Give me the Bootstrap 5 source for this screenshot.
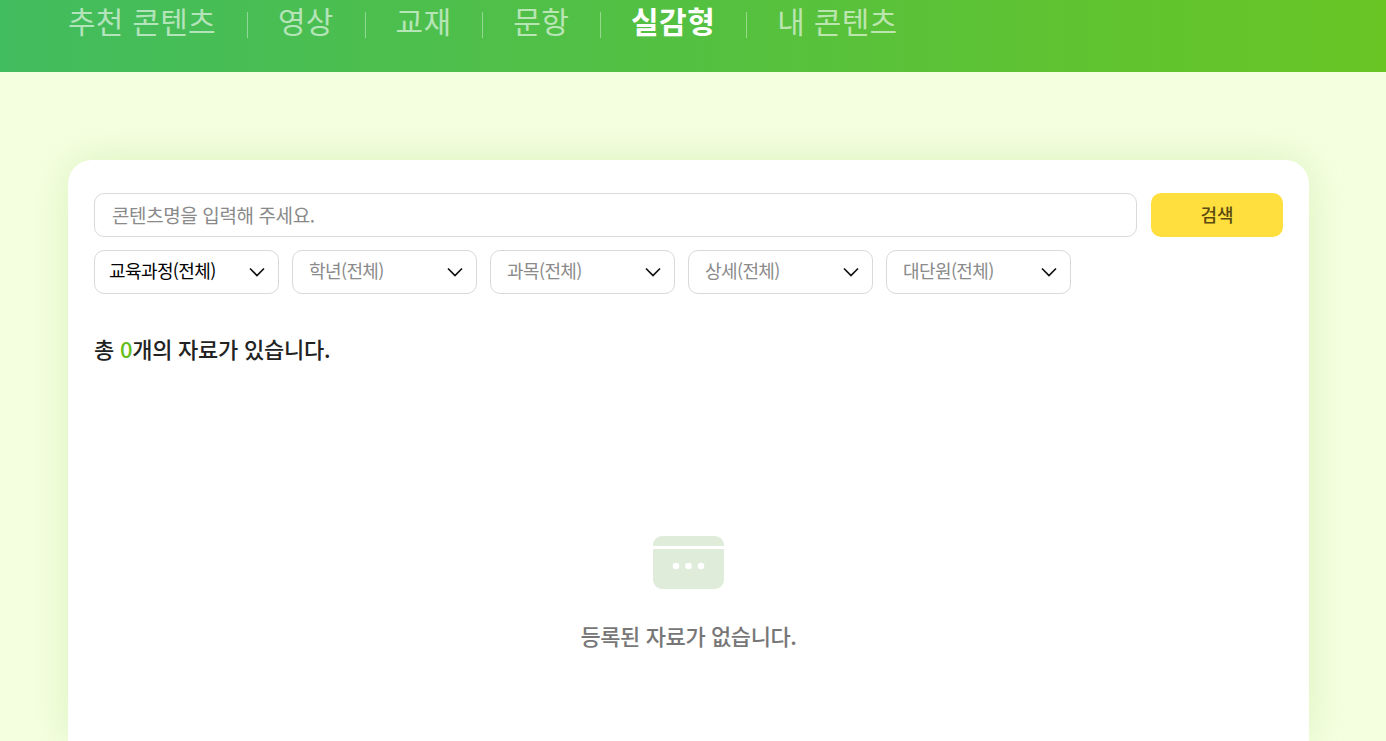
<!DOCTYPE html>
<html lang="ko">
<head>
  <meta charset="UTF-8">
  <meta name="viewport" content="width=device-width, initial-scale=1.0">
  <title>실감형</title>
  <link href="https://cdn.jsdelivr.net/npm/bootstrap@5.3.0/dist/css/bootstrap.min.css" rel="stylesheet">
  <style>
    body {
      font-family: "Noto Sans CJK KR", "Noto Sans", sans-serif;
      background: #f4ffe0;
      color: #222;
    }
    .top-band {
      height: 72px;
      background: linear-gradient(to right, #41bc5e, #68c524);
      padding-left: 68px;
    }
    .top-tabs {
      height: 44px;
    }
    .top-tabs a {
      font-size: 30px;
      font-weight: 400;
      line-height: 44px;
      margin-top: -2px;
      letter-spacing: 0.25px;
      color: rgba(255, 255, 255, 0.6);
      text-decoration: none;
      white-space: nowrap;
    }
    .top-tabs a.on {
      color: #fff;
      font-weight: 700;
      letter-spacing: 0.5px;
    }
    .tab-sep {
      width: 1px;
      height: 26px;
      margin: 12px 30px 0 31px;
      background: rgba(255, 255, 255, 0.4);
    }
    .panel {
      width: 1241px;
      height: 581px;
      margin: 88px 0 0 68px;
      padding: 33px 26px 0;
      background: #fff;
      border-radius: 24px 24px 0 0;
      box-shadow: 0 0 40px rgba(120, 190, 60, 0.2);
    }
    .search-box.form-control {
      height: 44px;
      padding: 0 17px 2px;
      font-size: 19px;
      letter-spacing: -0.4px;
      border: 1px solid #d9d9d9;
      border-radius: 10px;
      color: #222;
    }
    .search-box::placeholder {
      color: #8a8a8a;
    }
    .search-btn.btn {
      width: 132px;
      height: 44px;
      margin-left: 14px;
      padding: 0 0 2px;
      background: #ffdf3e;
      border: 0;
      border-radius: 10px;
      color: #5a4a10;
      font-size: 18px;
      font-weight: 500;
    }
    .filter-row {
      gap: 13px;
      margin-top: 13px;
    }
    .filter-pick {
      width: 185px;
      height: 44px;
      padding: 0 13px 0 16px;
      border: 1px solid #d9d9d9;
      border-radius: 10px;
      font-size: 18px;
      letter-spacing: -0.6px;
      color: #8a8a8a;
    }
    .filter-pick span {
      margin-top: -3px;
    }
    .filter-pick.picked {
      padding-left: 14px;
      color: #000;
    }
    .count-line {
      margin: 39px 0 0;
      font-size: 22px;
      font-weight: 500;
      letter-spacing: -0.25px;
      line-height: 30px;
      color: #222;
    }
    .count-line b {
      font-weight: 500;
      color: #63bd1a;
    }
    .empty-box {
      margin-top: 173px;
    }
    .empty-text {
      margin: 30px 0 0;
      font-size: 22px;
      font-weight: 500;
      letter-spacing: -0.4px;
      color: #777;
    }
  </style>
</head>
<body>
  <header class="top-band">
    <nav class="top-tabs d-flex align-items-start">
      <a href="#">추천 콘텐츠</a>
      <span class="tab-sep"></span>
      <a href="#">영상</a>
      <span class="tab-sep"></span>
      <a href="#">교재</a>
      <span class="tab-sep"></span>
      <a href="#">문항</a>
      <span class="tab-sep"></span>
      <a href="#" class="on">실감형</a>
      <span class="tab-sep"></span>
      <a href="#">내 콘텐츠</a>
    </nav>
  </header>

  <main class="panel">
    <div class="d-flex">
      <input type="text" class="form-control search-box" placeholder="콘텐츠명을 입력해 주세요.">
      <button type="button" class="btn search-btn flex-shrink-0">검색</button>
    </div>

    <div class="d-flex filter-row">
      <div class="filter-pick picked d-flex align-items-center justify-content-between">
        <span>교육과정(전체)</span>
        <svg width="16" height="10" viewBox="0 0 16 10"><path d="M1 1.5l7 7 7-7" fill="none" stroke="#111" stroke-width="1.7"/></svg>
      </div>
      <div class="filter-pick d-flex align-items-center justify-content-between">
        <span>학년(전체)</span>
        <svg width="16" height="10" viewBox="0 0 16 10"><path d="M1 1.5l7 7 7-7" fill="none" stroke="#111" stroke-width="1.7"/></svg>
      </div>
      <div class="filter-pick d-flex align-items-center justify-content-between">
        <span>과목(전체)</span>
        <svg width="16" height="10" viewBox="0 0 16 10"><path d="M1 1.5l7 7 7-7" fill="none" stroke="#111" stroke-width="1.7"/></svg>
      </div>
      <div class="filter-pick d-flex align-items-center justify-content-between">
        <span>상세(전체)</span>
        <svg width="16" height="10" viewBox="0 0 16 10"><path d="M1 1.5l7 7 7-7" fill="none" stroke="#111" stroke-width="1.7"/></svg>
      </div>
      <div class="filter-pick d-flex align-items-center justify-content-between">
        <span>대단원(전체)</span>
        <svg width="16" height="10" viewBox="0 0 16 10"><path d="M1 1.5l7 7 7-7" fill="none" stroke="#111" stroke-width="1.7"/></svg>
      </div>
    </div>

    <p class="count-line">총 <b>0</b>개의 자료가 있습니다.</p>

    <div class="empty-box text-center">
      <svg class="d-block mx-auto" width="71" height="53" viewBox="0 0 71 53">
        <path d="M0 9a9 9 0 0 1 9-9h53a9 9 0 0 1 9 9v1H0zM0 13h71v31a9 9 0 0 1-9 9H9a9 9 0 0 1-9-9z" fill="#deecd9"/>
        <circle cx="23" cy="30" r="3.3" fill="#fff"/>
        <circle cx="35.5" cy="30" r="3.3" fill="#fff"/>
        <circle cx="48" cy="30" r="3.3" fill="#fff"/>
      </svg>
      <p class="empty-text">등록된 자료가 없습니다.</p>
    </div>
  </main>
</body>
</html>
